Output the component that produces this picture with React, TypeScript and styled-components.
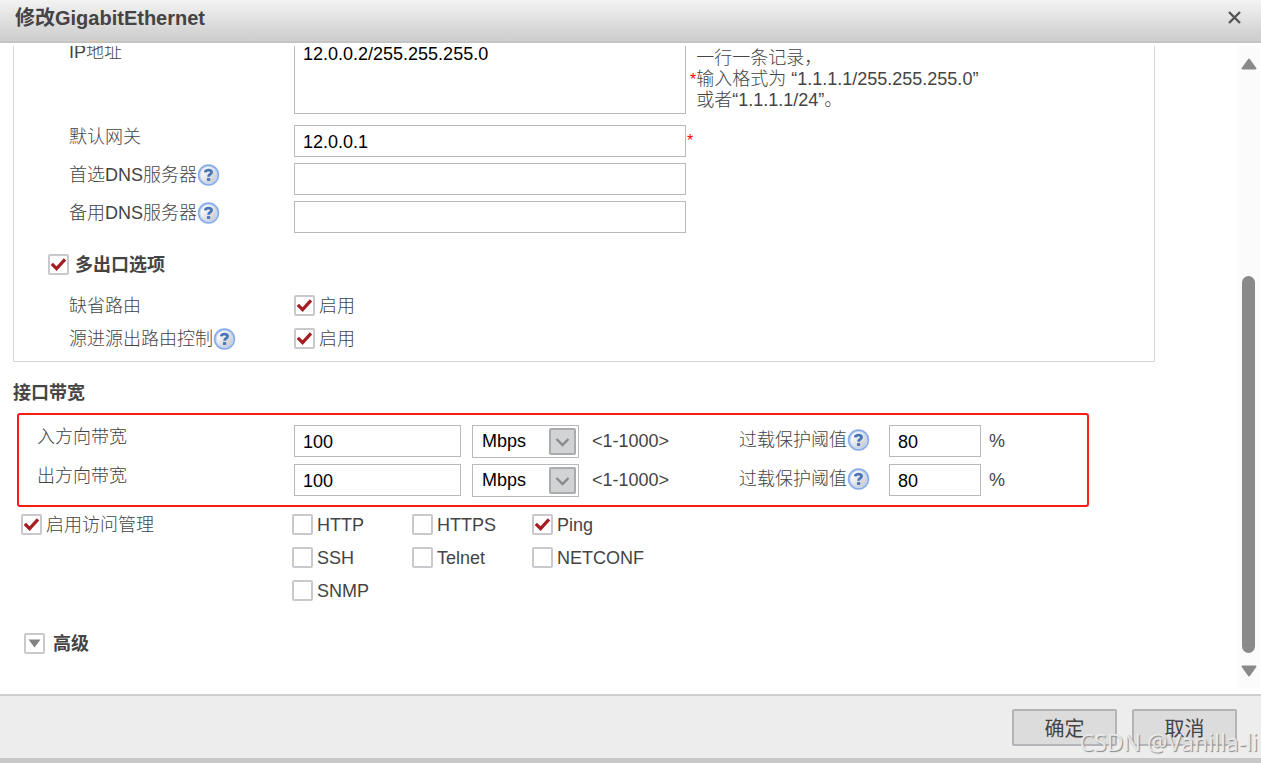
import React, { useId } from 'react';
import styled, { createGlobalStyle } from 'styled-components';

const GlobalStyle = createGlobalStyle`
  * { box-sizing: border-box; }
  body {
    margin: 0;
    background: #fff;
    color: #444;
    font: 300 18px/24px "Liberation Sans", "Noto Sans CJK SC", sans-serif;
  }
  input, select, textarea, button { font: inherit; margin: 0; }
`;

const Dialog = styled.div`
  display: flex;
  flex-direction: column;
  height: 100vh;
`;

const TitleBar = styled.header`
  display: flex;
  flex: none;
  align-items: center;
  justify-content: space-between;
  height: 43px;
  padding: 0 20px 6px 15px;
  background: linear-gradient(#f3f3f3, #cfcfcf 38px);
  border-bottom: 2px solid #c4c4c4;
`;

const Title = styled.h1`
  margin: 0;
  font-size: 20px;
  font-weight: bold;
  line-height: 24px;
`;

const CloseButton = styled.button`
  display: flex;
  padding: 0;
  border: 0;
  background: none;
`;

const Body = styled.main`
  display: flex;
  flex: 1;
  min-height: 0;
  margin-top: 3px;
  overflow: hidden;
`;

const Form = styled.form`
  flex: 1;
  min-width: 0;
  margin-top: -20px;
  padding-left: 13px;
`;

const Panel = styled.section`
  margin-right: 82px;
  padding: 13px 0 6px 55px;
  border: 1px solid #d6d6d6;
`;

const FieldRow = styled.div<{ $gap?: number }>`
  display: grid;
  grid-template-columns: 225px 392px 1fr;
  margin-bottom: ${(p) => p.$gap ?? 6}px;
`;

const LabelCell = styled.div`
  display: flex;
  align-items: center;
  align-self: start;
  height: 24px;
  white-space: nowrap;
`;

const TextBox = styled.input`
  width: 100%;
  min-width: 0;
  height: 32px;
  padding: 2px 8px 0;
  border: 1px solid #b9b9be;
  border-radius: 0;
  background: #fff;
  color: #000;
`;

const AddressBox = styled.textarea`
  display: block;
  width: 100%;
  height: 74px;
  padding: 2px 8px;
  border: 1px solid #b9b9be;
  border-radius: 0;
  color: #000;
  line-height: 22px;
  resize: none;
  overflow: hidden;
`;

const Star = styled.span`
  padding: 4px 0 0 1px;
  color: #f00;
  font-size: 16px;
`;

const FormatHint = styled.div`
  display: flex;
  align-items: center;
  padding: 4px 0 0 3px;
  line-height: 21px;
  ${Star} { padding-top: 0; }
`;

const HintText = styled.p`
  margin: 0;
`;

const OptionRow = styled.div`
  display: grid;
  grid-template-columns: 225px 1fr;
  align-items: center;
  height: 33px;
  ${LabelCell} { align-self: center; }
`;

const PanelHeading = styled.div`
  display: flex;
  align-items: center;
  height: 33px;
  margin: 15px 0 8px -21px;
`;

const CheckLabel = styled.label<{ $bold?: boolean; $gap?: number }>`
  display: inline-flex;
  align-items: center;
  gap: ${(p) => p.$gap ?? 4}px;
  font-weight: ${(p) => (p.$bold ? 'bold' : 'inherit')};
  white-space: nowrap;
`;

const CheckFrame = styled.span`
  display: grid;
  flex: none;
  width: 21px;
  height: 21px;
  > * { grid-area: 1 / 1; }
  > svg { pointer-events: none; visibility: hidden; }
  > input:checked + svg { visibility: visible; }
`;

const CheckInput = styled.input`
  appearance: none;
  width: 21px;
  height: 21px;
  border: 2px solid #c9c9cd;
  border-radius: 2px;
  background: #fff;
`;

const SectionTitle = styled.h2`
  margin: 19px 0 8px;
  font-size: 18px;
  font-weight: bold;
  line-height: 24px;
`;

const Highlight = styled.section`
  display: grid;
  gap: 6px;
  margin: 0 148px 0 4px;
  padding: 10px 0 8px 18px;
  border: 2px solid #f81d12;
  border-radius: 3px;
`;

const BandwidthRow = styled.div`
  display: grid;
  grid-template-columns: 257px 167px 118px 160px 150px 92px 1fr;
  height: 33px;
`;

const UnitFrame = styled.div`
  display: grid;
  margin-left: 11px;
  > * { grid-area: 1 / 1; }
  > svg {
    align-self: center;
    justify-self: end;
    margin-right: 3px;
    pointer-events: none;
  }
`;

const UnitSelect = styled.select`
  appearance: none;
  height: 33px;
  padding: 0 9px 2px;
  border: 1px solid #b9b9be;
  border-radius: 0;
  background: #fff;
  color: #000;
`;

const RangeText = styled.span`
  padding: 4px 0 0 13px;
`;

const ThresholdLabel = styled.div`
  display: flex;
  align-items: center;
  height: 30px;
  white-space: nowrap;
`;

const Percent = styled.span`
  padding: 4px 0 0 8px;
`;

const AccessRow = styled.div`
  display: grid;
  grid-template-columns: 271px 1fr;
  margin-top: 1px;
  padding-left: 8px;
`;

const AccessToggle = styled.div`
  display: flex;
  align-items: center;
  height: 33px;
`;

const Protocols = styled.div`
  display: grid;
  grid-template-columns: repeat(3, 120px);
  grid-auto-rows: 33px;
  align-items: center;
`;

const AdvancedButton = styled.button`
  display: flex;
  align-items: center;
  gap: 8px;
  height: 33px;
  margin: 20px 0 0 11px;
  padding: 0;
  border: 0;
  background: none;
  color: inherit;
  font-weight: bold;
`;

const ScrollTrack = styled.div`
  display: flex;
  flex: none;
  flex-direction: column;
  align-items: center;
  width: 23px;
  margin: 0 1px 6px 0;
  padding: 12px 0 11px;
  background: #fbfbfb;
`;

const ScrollThumb = styled.div`
  width: 13px;
  flex: 378 0 0;
  margin-bottom: 12px;
  border-radius: 7px;
  background: #8a8a8a;
`;

const ScrollSpace = styled.div`
  flex: 206 0 0;
`;

const Footer = styled.footer`
  position: relative;
  display: flex;
  flex: none;
  justify-content: flex-end;
  gap: 15px;
  height: 69px;
  padding: 13px 24px 0;
  border-top: 2px solid #cfcfcf;
  border-bottom: 5px solid #c8c8c8;
  background: #ededed;
`;

const ActionButton = styled.button`
  width: 105px;
  height: 37px;
  padding: 2px 0 0;
  border: 2px solid #b4b4b8;
  border-radius: 2px;
  background: #dcdcdc;
  color: #444;
  font-size: 20px;
  font-weight: 400;
`;

const Watermark = styled.span`
  position: absolute;
  right: 3px;
  bottom: 0;
  color: rgba(240, 240, 240, 0.9);
  font: 23px/32px "Noto Sans", sans-serif;
  text-shadow: 1px 1px 1px #888;
  white-space: nowrap;
`;

const HelpIcon = () => {
  const id = useId();
  return (
    <svg width="24" height="24" viewBox="0 0 24 24" role="img" aria-label="帮助">
      <defs>
        <linearGradient id={id} x1="0" y1="0" x2="1" y2="1">
          <stop offset="0.2" stopColor="#fff" />
          <stop offset="0.8" stopColor="#cdcdd2" />
        </linearGradient>
      </defs>
      <circle cx="11.5" cy="12" r="9.4" fill={`url(#${id})`} stroke="#c3d5f4" strokeWidth="3" />
      <circle cx="11.5" cy="12" r="9.9" fill="none" stroke="#82a8e6" strokeWidth="1.3" />
      <path d="M8.2 9.4Q8.4 7.1 11.5 7.1Q14.6 7.1 14.6 9.3Q14.6 10.7 12.9 11.5Q11.6 12.2 11.6 13.7" fill="none" stroke="#4a76b8" strokeWidth="2.8" />
      <rect x="10" y="15.1" width="3.2" height="2.8" fill="#4a76b8" />
    </svg>
  );
};

type CheckProps = { label: string; checked?: boolean; bold?: boolean; gap?: number };

const Check = ({ label, checked, bold, gap }: CheckProps) => (
  <CheckLabel $bold={bold} $gap={gap}>
    <CheckFrame>
      <CheckInput type="checkbox" defaultChecked={checked} />
      <svg width="21" height="21" viewBox="0 0 21 21" aria-hidden="true">
        <path d="M3.8 9.8L8.6 14.6L17 5.4" fill="none" stroke="#a51d22" strokeWidth="3.2" />
      </svg>
    </CheckFrame>
    {label}
  </CheckLabel>
);

type FieldProps = { label: string; value?: string; help?: boolean; required?: boolean; gap?: number };

const Field = ({ label, value, help, required, gap }: FieldProps) => {
  const id = useId();
  return (
    <FieldRow $gap={gap}>
      <LabelCell>
        <label htmlFor={id}>{label}</label>
        {help && <HelpIcon />}
      </LabelCell>
      <TextBox id={id} defaultValue={value} />
      {required && <Star>*</Star>}
    </FieldRow>
  );
};

const Bandwidth = ({ label }: { label: string }) => {
  const id = useId();
  return (
    <BandwidthRow>
      <LabelCell><label htmlFor={id}>{label}</label></LabelCell>
      <TextBox id={id} defaultValue="100" />
      <UnitFrame>
        <UnitSelect aria-label={`${label}单位`}>
          <option>Mbps</option>
        </UnitSelect>
        <svg width="27" height="27" viewBox="0 0 27 27" aria-hidden="true">
          <rect x="1" y="1" width="25" height="25" rx="1" fill="#d2d3d5" stroke="#aaabae" strokeWidth="2" />
          <path d="M7.5 11L13.5 17L19.5 11" fill="none" stroke="#8a8b8e" strokeWidth="2.4" />
        </svg>
      </UnitFrame>
      <RangeText>&lt;1-1000&gt;</RangeText>
      <ThresholdLabel>
        <label htmlFor={`${id}-limit`}>过载保护阈值</label>
        <HelpIcon />
      </ThresholdLabel>
      <TextBox id={`${id}-limit`} defaultValue="80" />
      <Percent>%</Percent>
    </BandwidthRow>
  );
};

const protocols = ['HTTP', 'HTTPS', 'Ping', 'SSH', 'Telnet', 'NETCONF', 'SNMP'];

export default function App() {
  return (
    <Dialog role="dialog" aria-labelledby="dialog-title">
      <GlobalStyle />
      <TitleBar>
        <Title id="dialog-title">修改GigabitEthernet</Title>
        <CloseButton aria-label="关闭">
          <svg width="13" height="13" viewBox="0 0 13 13">
            <path d="M1 1L12 12M12 1L1 12" stroke="#555" strokeWidth="2.4" />
          </svg>
        </CloseButton>
      </TitleBar>
      <Body>
        <Form>
          <Panel>
            <FieldRow $gap={11}>
              <LabelCell><label htmlFor="address">IP地址</label></LabelCell>
              <AddressBox id="address" defaultValue="12.0.0.2/255.255.255.0" />
              <FormatHint>
                <Star>*</Star>
                <HintText>
                  一行一条记录，<br />
                  输入格式为 “1.1.1.1/255.255.255.0”<br />
                  或者“1.1.1.1/24”。
                </HintText>
              </FormatHint>
            </FieldRow>
            <Field label="默认网关" value="12.0.0.1" required />
            <Field label="首选DNS服务器" help />
            <Field label="备用DNS服务器" help gap={0} />
            <PanelHeading><Check label="多出口选项" checked bold gap={6} /></PanelHeading>
            <OptionRow>
              <LabelCell>缺省路由</LabelCell>
              <Check label="启用" checked />
            </OptionRow>
            <OptionRow>
              <LabelCell>源进源出路由控制<HelpIcon /></LabelCell>
              <Check label="启用" checked />
            </OptionRow>
          </Panel>
          <SectionTitle>接口带宽</SectionTitle>
          <Highlight>
            <Bandwidth label="入方向带宽" />
            <Bandwidth label="出方向带宽" />
          </Highlight>
          <AccessRow>
            <AccessToggle><Check label="启用访问管理" checked /></AccessToggle>
            <Protocols>
              {protocols.map((name) => (
                <Check key={name} label={name} checked={name === 'Ping'} />
              ))}
            </Protocols>
          </AccessRow>
          <AdvancedButton type="button">
            <svg width="21" height="21" viewBox="0 0 21 21" aria-hidden="true">
              <rect x="1" y="1" width="19" height="19" rx="1" fill="#fff" stroke="#c9c9cd" strokeWidth="2" />
              <path d="M4.5 6.5H16.5L10.5 14.5Z" fill="#828282" />
            </svg>
            高级
          </AdvancedButton>
        </Form>
        <ScrollTrack aria-hidden="true">
          <svg width="16" height="12" viewBox="0 0 16 12">
            <path d="M8 1.5L14.5 10.5H1.5Z" fill="#8a8a8a" stroke="#8a8a8a" strokeWidth="2" strokeLinejoin="round" />
          </svg>
          <ScrollSpace />
          <ScrollThumb />
          <svg width="16" height="12" viewBox="0 0 16 12">
            <path d="M8 10.5L14.5 1.5H1.5Z" fill="#8a8a8a" stroke="#8a8a8a" strokeWidth="2" strokeLinejoin="round" />
          </svg>
        </ScrollTrack>
      </Body>
      <Footer>
        <ActionButton>确定</ActionButton>
        <ActionButton>取消</ActionButton>
        <Watermark>CSDN @Vanilla-li</Watermark>
      </Footer>
    </Dialog>
  );
}
